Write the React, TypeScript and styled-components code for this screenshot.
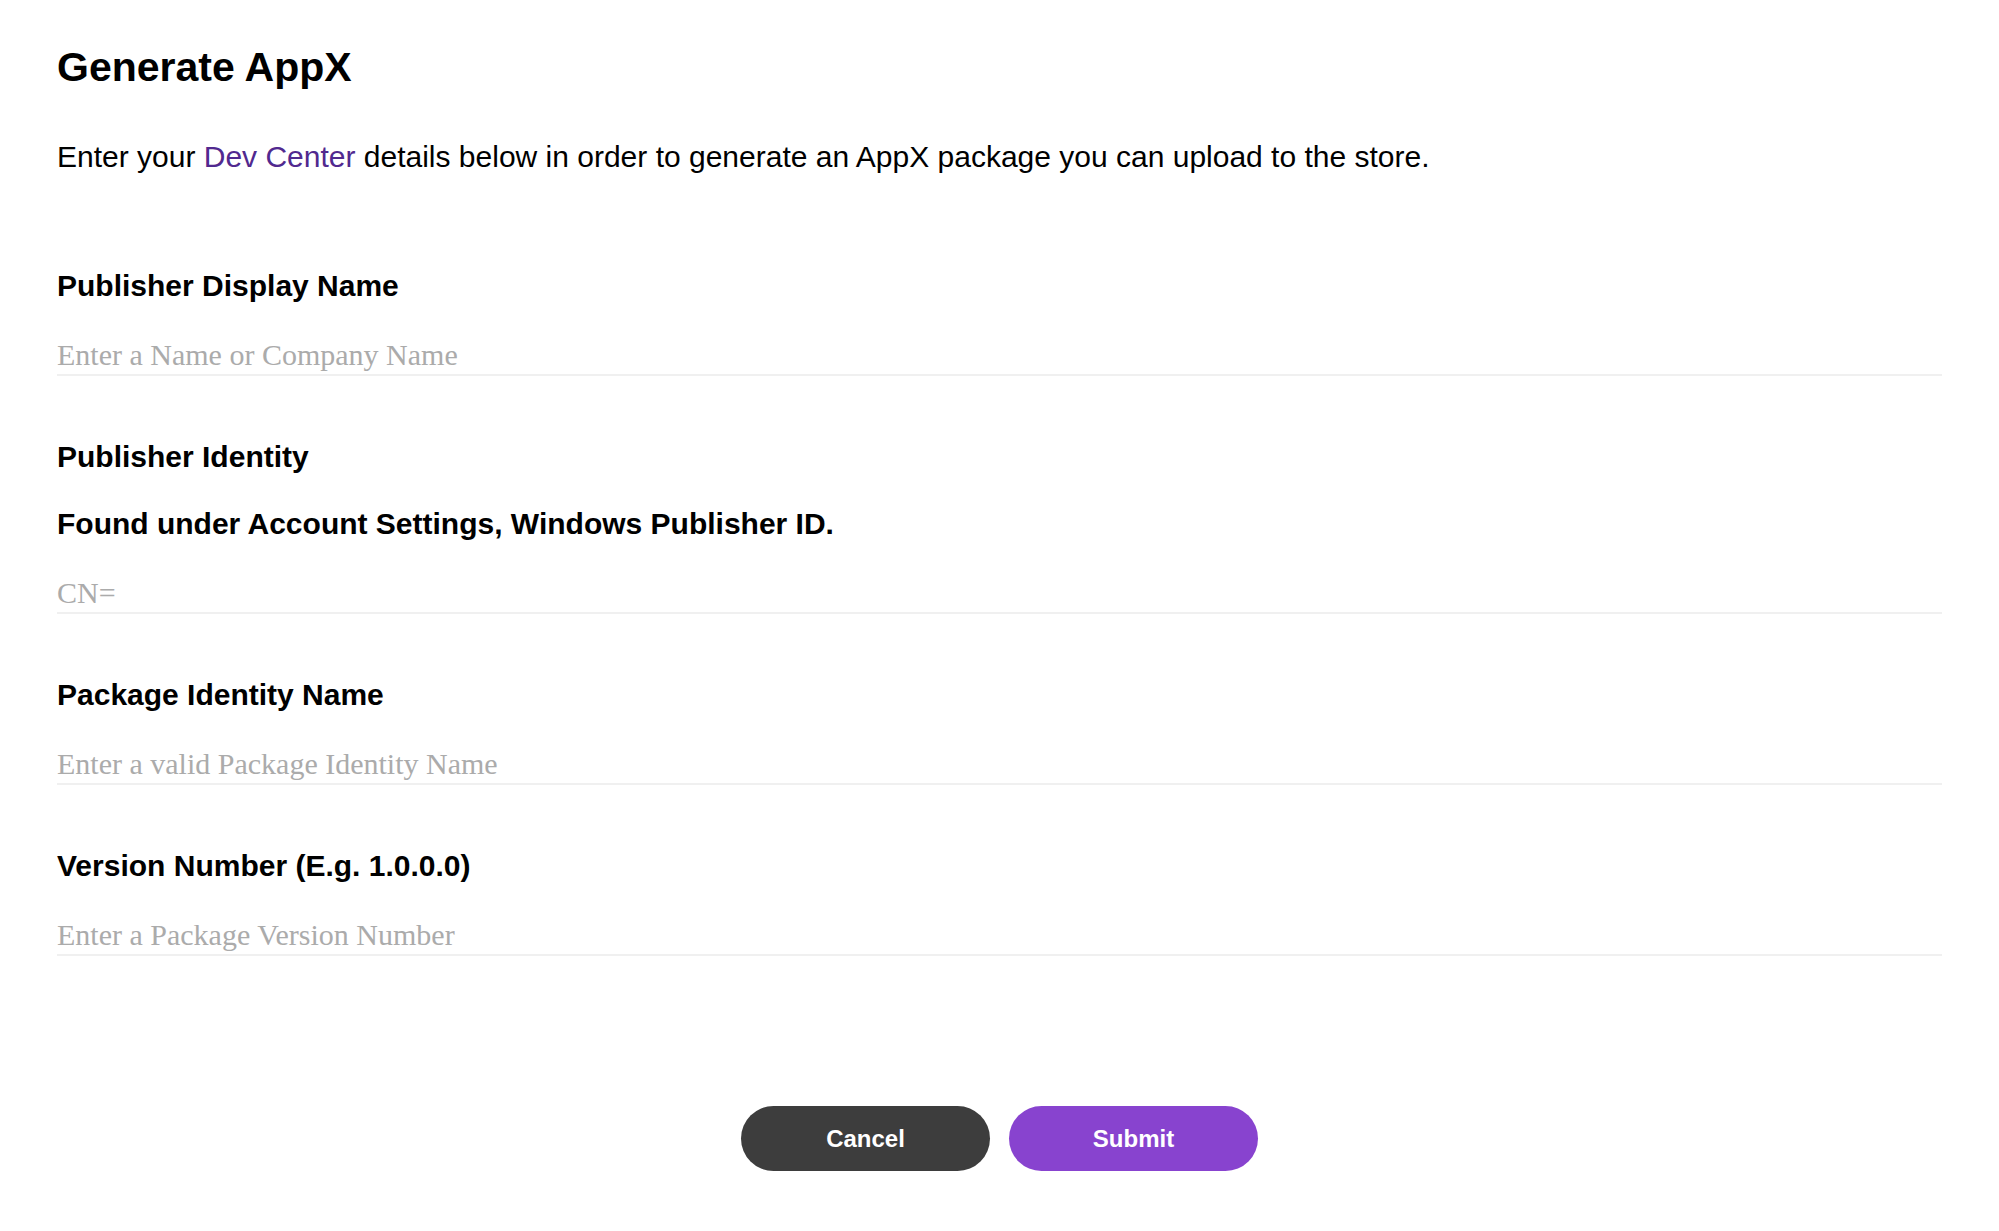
import React from "react";
import styled, { createGlobalStyle } from "styled-components";

const GlobalStyle = createGlobalStyle`
  html, body {
    margin: 0;
    padding: 0;
    background: #ffffff;
  }
  body {
    font-family: "Liberation Sans", Arial, sans-serif;
    color: #000000;
  }
`;

const Page = styled.main`
  padding: 43px 57px 40px 57px;
  display: flex;
  flex-direction: column;
`;

const Title = styled.h1`
  margin: 0;
  font-size: 41px;
  line-height: 48px;
  font-weight: 700;
`;

const Intro = styled.p`
  margin: 48px 0 0;
  font-size: 30px;
  line-height: 36px;
  font-weight: 400;
`;

const DevLink = styled.a`
  color: #51298f;
  text-decoration: none;
`;

const Form = styled.form`
  margin-top: 93px;
  display: flex;
  flex-direction: column;
  gap: 63px;
`;

const Field = styled.div`
  display: flex;
  flex-direction: column;
  gap: 31px;
`;

const Label = styled.label`
  font-size: 30px;
  line-height: 36px;
  font-weight: 700;
`;

const Input = styled.input`
  box-sizing: content-box;
  display: block;
  width: 100%;
  height: 39px;
  padding: 0;
  margin: 0;
  border: none;
  border-bottom: 2px solid #f0f0f0;
  outline: none;
  background: transparent;
  font-family: "Liberation Serif", "Times New Roman", serif;
  font-size: 30px;
  color: #222;
  &::placeholder {
    color: #ababab;
    opacity: 1;
  }
`;

const Actions = styled.div`
  margin-top: 150px;
  display: flex;
  justify-content: center;
  gap: 19px;
`;

const Button = styled.button<{ $variant: "dark" | "primary" }>`
  width: 249px;
  height: 65px;
  border: none;
  border-radius: 33px;
  background: ${(p) => (p.$variant === "dark" ? "#3d3d3d" : "#8843cf")};
  color: #ffffff;
  font-family: "Liberation Sans", Arial, sans-serif;
  font-size: 24px;
  font-weight: 700;
  cursor: pointer;
`;

export default function App() {
  return (
    <>
      <GlobalStyle />
      <Page>
        <Title>Generate AppX</Title>
        <Intro>
          Enter your <DevLink href="#">Dev Center</DevLink> details below in
          order to generate an AppX package you can upload to the store.
        </Intro>
        <Form onSubmit={(e) => e.preventDefault()}>
          <Field>
            <Label>Publisher Display Name</Label>
            <Input placeholder="Enter a Name or Company Name" />
          </Field>
          <Field>
            <Label>Publisher Identity</Label>
            <Label>Found under Account Settings, Windows Publisher ID.</Label>
            <Input placeholder="CN=" />
          </Field>
          <Field>
            <Label>Package Identity Name</Label>
            <Input placeholder="Enter a valid Package Identity Name" />
          </Field>
          <Field>
            <Label>Version Number (E.g. 1.0.0.0)</Label>
            <Input placeholder="Enter a Package Version Number" />
          </Field>
        </Form>
        <Actions>
          <Button type="button" $variant="dark">Cancel</Button>
          <Button type="button" $variant="primary">Submit</Button>
        </Actions>
      </Page>
    </>
  );
}
